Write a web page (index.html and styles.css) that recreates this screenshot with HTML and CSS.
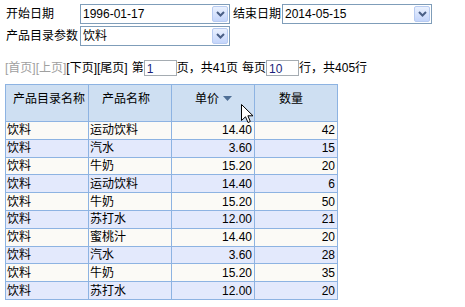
FILE: index.html
```html
<!DOCTYPE html>
<html lang="zh">
<head>
<meta charset="utf-8">
<title>产品查询</title>
<link rel="stylesheet" href="styles.css">
</head>
<body>
<div class="filters">
  <div class="frow">
    <span class="lbl">开始日期</span>
    <div class="sel"><span class="val">1996-01-17</span><span class="btn"><svg width="9" height="6" viewBox="0 0 9 6"><path d="M1 1 L4.5 4.5 L8 1" fill="none" stroke="#4a5f86" stroke-width="2"/></svg></span></div>
    <span class="lbl2">结束日期</span>
    <div class="sel"><span class="val">2014-05-15</span><span class="btn"><svg width="9" height="6" viewBox="0 0 9 6"><path d="M1 1 L4.5 4.5 L8 1" fill="none" stroke="#4a5f86" stroke-width="2"/></svg></span></div>
  </div>
  <div class="frow">
    <span class="lbl">产品目录参数</span>
    <div class="sel"><span class="val">饮料</span><span class="btn"><svg width="9" height="6" viewBox="0 0 9 6"><path d="M1 1 L4.5 4.5 L8 1" fill="none" stroke="#4a5f86" stroke-width="2"/></svg></span></div>
  </div>
</div>

<div class="pager">
  <span class="dis">[首页]</span><span class="dis">[上页]</span><span>[下页]</span><span>[尾页]</span>
  <span class="sp">第</span><input class="inp" value="1"><span>页，共41页</span>
  <span class="sp">每页</span><input class="inp" value="10"><span>行，共405行</span>
</div>

<table class="grid">
  <colgroup><col class="c"><col class="c"><col class="c"><col class="c"></colgroup>
  <thead>
    <tr>
      <th class="h1">产品目录名称</th>
      <th class="h2">产品名称</th>
      <th class="h3">单价<svg class="sort" width="9" height="5" viewBox="0 0 9 5"><path d="M0 0 H9 L4.5 5 Z" fill="#4f6f96"/></svg></th>
      <th class="h4">数量</th>
    </tr>
  </thead>
  <tbody>
    <tr><td>饮料</td><td>运动饮料</td><td class="n">14.40</td><td class="n">42</td></tr>
    <tr><td>饮料</td><td>汽水</td><td class="n">3.60</td><td class="n">15</td></tr>
    <tr><td>饮料</td><td>牛奶</td><td class="n">15.20</td><td class="n">20</td></tr>
    <tr><td>饮料</td><td>运动饮料</td><td class="n">14.40</td><td class="n">6</td></tr>
    <tr><td>饮料</td><td>牛奶</td><td class="n">15.20</td><td class="n">50</td></tr>
    <tr><td>饮料</td><td>苏打水</td><td class="n">12.00</td><td class="n">21</td></tr>
    <tr><td>饮料</td><td>蜜桃汁</td><td class="n">14.40</td><td class="n">20</td></tr>
    <tr><td>饮料</td><td>汽水</td><td class="n">3.60</td><td class="n">28</td></tr>
    <tr><td>饮料</td><td>牛奶</td><td class="n">15.20</td><td class="n">35</td></tr>
    <tr><td>饮料</td><td>苏打水</td><td class="n">12.00</td><td class="n">20</td></tr>
  </tbody>
</table>

<svg class="cursor" width="13" height="20" viewBox="0 0 13 20"><path d="M0.5 0.5 L0.5 16.5 L4.5 12.8 L7 18.5 L9.3 17.5 L6.9 11.8 L12 11.8 Z" fill="#fff" stroke="#000" stroke-width="1"/></svg>
</body>
</html>
```

FILE: styles.css
```css
html, body {
  margin: 0;
  background: #fff;
}
body {
  padding: 4px 0 0 6px;
  font-family: "Liberation Sans", "Noto Sans CJK SC", sans-serif;
  font-size: 12px;
  line-height: 16px;
  color: #000;
}

.filters {
  display: flex;
  flex-direction: column;
  gap: 2px;
}
.frow {
  display: flex;
  align-items: center;
  height: 20px;
}
.lbl {
  width: 74px;
}
.lbl2 {
  margin: 0 1px 0 3px;
}
.sel {
  width: 150px;
  height: 20px;
  box-sizing: border-box;
  border: 1px solid #7f9db9;
  background: #fff;
  display: flex;
  align-items: center;
}
.val {
  flex: 1;
  padding-left: 2px;
  color: #000;
}
.btn {
  width: 16px;
  height: 16px;
  margin-right: 1px;
  box-sizing: border-box;
  border: 1px solid #b7cbf1;
  border-radius: 2px;
  background: linear-gradient(#eaf1fe, #c4d5fb);
  display: flex;
  align-items: center;
  justify-content: center;
}

.pager {
  display: flex;
  align-items: center;
  height: 16px;
  margin: 14px 0 0 -1px;
}
.dis {
  color: #a0a0a0;
}
.sp {
  margin-left: 4px;
}
.inp {
  width: 33px;
  height: 16px;
  box-sizing: border-box;
  border: 1px solid #a5acb2;
  padding: 2px 0 0 2px;
  margin: 0;
  font: inherit;
  line-height: 12px;
  color: #1b1f7a;
  background: #fff;
  outline: none;
}

.grid {
  margin: 8px 0 0 -1px;
  border-collapse: collapse;
  table-layout: fixed;
  width: 333px;
}
.grid col.c {
  width: 83px;
}
.grid th,
.grid td {
  border: 1px solid #8db3e2;
  padding: 0;
  white-space: nowrap;
  overflow: hidden;
}
.grid th {
  background: #cedff2;
  font-weight: normal;
  height: 37px;
  vertical-align: top;
  padding-top: 6px;
  box-sizing: border-box;
  text-align: left;
}
.grid th.h1 { padding-left: 7px; }
.grid th.h2 { padding-left: 13px; }
.grid th.h3 { text-align: right; padding-right: 22px; }
.grid th.h4 { padding-left: 24px; }
.sort {
  margin-left: 4px;
  vertical-align: 2px;
}
.grid td {
  height: 16.8px;
  line-height: 16px;
  padding-left: 1px;
}
.grid td.n {
  text-align: right;
  padding: 0 2px 0 0;
}
.grid tbody tr:nth-child(odd) td {
  background: #fbfaf6;
}
.grid tbody tr:nth-child(even) td {
  background: #e3e9fc;
}

.cursor {
  position: absolute;
  left: 241px;
  top: 104px;
}
```
